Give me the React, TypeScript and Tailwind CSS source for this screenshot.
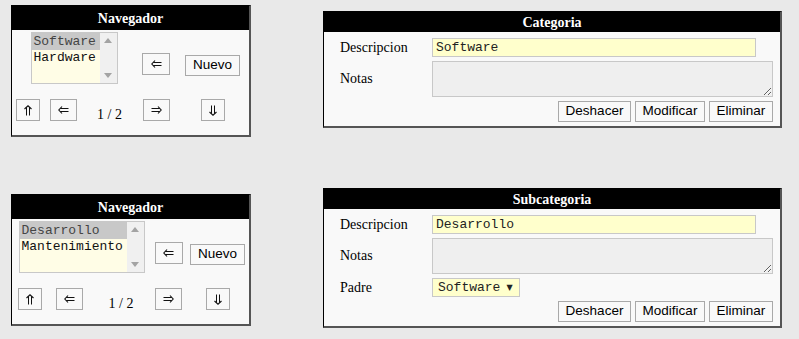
import type { ReactNode } from 'react';

const serif = { fontFamily: '"Liberation Serif", "Times New Roman", serif' };

function Btn({ w, h = 22, children, className = '' }: { w: number; h?: number; children: ReactNode; className?: string }) {
  return (
    <div
      className={`flex items-center justify-center border border-[#a9a9a9] bg-[#f9f9f9] text-[13.5px] text-black font-['Liberation_Sans',Arial,sans-serif] ${className}`}
      style={{ width: w, height: h }}
    >
      {children}
    </div>
  );
}

// double arrows, drawn pointing left then rotated
function DoubleArrow({ dir }: { dir: 'left' | 'right' | 'up' | 'down' }) {
  const rot = { left: 0, right: 180, up: 90, down: 270 }[dir];
  const vertical = dir === 'up' || dir === 'down';
  return (
    <svg
      width={vertical ? 8 : 11}
      height={vertical ? 11 : 8}
      viewBox={vertical ? '0 0 8 11' : '0 0 11 8'}
      className="block"
    >
      <g transform={vertical ? `translate(4 5.5) rotate(${rot}) translate(-5.5 -4)` : `translate(5.5 4) rotate(${rot}) translate(-5.5 -4)`}>
        <path d="M4 0.5 L0.8 4 L4 7.5" fill="none" stroke="#111" strokeWidth="1.1" />
        <path d="M2.2 2.5 H10.5 M2.2 5.5 H10.5" fill="none" stroke="#111" strokeWidth="1" />
      </g>
    </svg>
  );
}

function Listbox({ items, width }: { items: string[]; width: number }) {
  return (
    <div className="flex h-[52px] border border-[#c8c8c8] bg-[#fffde6]" style={{ width }}>
      <div className="flex-1 font-['Liberation_Mono',monospace] text-[13px] leading-[16px]">
        {items.map((it, i) => (
          <div key={it} className={i === 0 ? 'bg-[#c8c8c8] text-[#444] pl-[2px] pt-[1px]' : 'pl-[2px] text-[#111]'}>
            {it}
          </div>
        ))}
      </div>
      <div className="w-[17px] bg-[#f0f0f0] flex flex-col items-center justify-between py-[5px]">
        <svg width="8" height="5" viewBox="0 0 8 5"><path d="M0 5 L4 0 L8 5 Z" fill="#a3a3a3" /></svg>
        <svg width="8" height="5" viewBox="0 0 8 5"><path d="M0 0 L4 5 L8 0 Z" fill="#a3a3a3" /></svg>
      </div>
    </div>
  );
}

function Navegador({ items, cols, listWidth, className = '' }: { items: string[]; cols: string; listWidth: number; className?: string }) {
  return (
    <div className={`w-[240px] border-l border-t border-black border-r-2 border-b-2 border-r-[#555] border-b-[#555] bg-[#f9f9f9] ${className}`}>
      <div className="h-[24px] bg-black text-white font-bold text-[14px] flex items-center justify-center" style={serif}>
        Navegador
      </div>
      <div className="grid pb-[12px]" style={{ gridTemplateColumns: cols }}>
        <div className="col-span-3 justify-self-center mt-[2px]">
          <Listbox items={items} width={listWidth} />
        </div>
        <div className="justify-self-center mt-[23px]">
          <Btn w={28}><DoubleArrow dir="left" /></Btn>
        </div>
        <div className="justify-self-center mt-[25px]">
          <Btn w={55} h={21}>Nuevo</Btn>
        </div>
        <div className="justify-self-center mt-[15px]">
          <Btn w={24}><DoubleArrow dir="up" /></Btn>
        </div>
        <div className="justify-self-center mt-[15px]">
          <Btn w={27}><DoubleArrow dir="left" /></Btn>
        </div>
        <div className="justify-self-center mt-[23px] text-[14px] leading-[16px] text-black" style={serif}>
          1 / 2
        </div>
        <div className="justify-self-center mt-[15px]">
          <Btn w={27}><DoubleArrow dir="right" /></Btn>
        </div>
        <div className="justify-self-center mt-[15px]">
          <Btn w={24}><DoubleArrow dir="down" /></Btn>
        </div>
      </div>
    </div>
  );
}

function Field({ label, children }: { label: string; children: ReactNode }) {
  return (
    <>
      <div className="pl-[16px] text-[14px] leading-[16px] text-black self-center" style={serif}>
        {label}
      </div>
      <div>{children}</div>
    </>
  );
}

function Ficha({ title, desc, padre, className = '' }: { title: string; desc: string; padre?: string; className?: string }) {
  return (
    <div className={`w-[459px] border-l border-t border-black border-r-2 border-b-2 border-r-[#555] border-b-[#555] bg-[#f9f9f9] ${className}`}>
      <div className="h-[20px] bg-black text-white font-bold text-[14px] flex items-center justify-center" style={serif}>
        {title}
      </div>
      <div className="grid grid-cols-[108px_1fr] gap-y-[4px] pt-[6px]">
        <Field label="Descripcion">
          <div className="w-[324px] h-[19px] border border-[#c8c8c8] bg-[#ffffcc] pl-[3px] font-['Liberation_Mono',monospace] text-[13px] leading-[17px] text-[#222]">
            {desc}
          </div>
        </Field>
        <Field label="Notas">
          <textarea readOnly className="block resize w-[341px] h-[36px] border border-[#c8c8c8] bg-[#efefef] outline-none" />
        </Field>
        {padre && (
          <Field label="Padre">
            <div className="w-[88px] h-[19px] border border-[#c8c8c8] bg-[#ffffcc] pl-[5px] flex items-center gap-[6px] font-['Liberation_Mono',monospace] text-[13px] leading-[17px] text-[#222]">
              <span>{padre}</span>
              <span className="text-[8px] font-['DejaVu_Sans',sans-serif]">▼</span>
            </div>
          </Field>
        )}
      </div>
      <div className="flex justify-end gap-[4px] pr-[7px] pt-[4px] pb-[4px]">
        <Btn w={73} h={21}>Deshacer</Btn>
        <Btn w={70} h={21}>Modificar</Btn>
        <Btn w={64} h={21}>Eliminar</Btn>
      </div>
    </div>
  );
}

export default function App() {
  return (
    <div className="min-h-screen w-full bg-[#e9e9e9] pl-[11px] pt-[5px]">
      <div className="flex items-start gap-[72px]">
        <Navegador items={['Software', 'Hardware']} cols="32px 39px 53px 40px 73px" listWidth={87} />
        <Ficha title="Categoria" desc="Software" className="mt-[6px]" />
      </div>
      <div className="flex items-start gap-[72px] mt-[51px]">
        <Navegador
          items={['Desarrollo', 'Mantenimiento']}
          cols="36px 43px 60px 35px 63px"
          listWidth={126}
          className="mt-[6px]"
        />
        <Ficha title="Subcategoria" desc="Desarrollo" padre="Software" />
      </div>
    </div>
  );
}
